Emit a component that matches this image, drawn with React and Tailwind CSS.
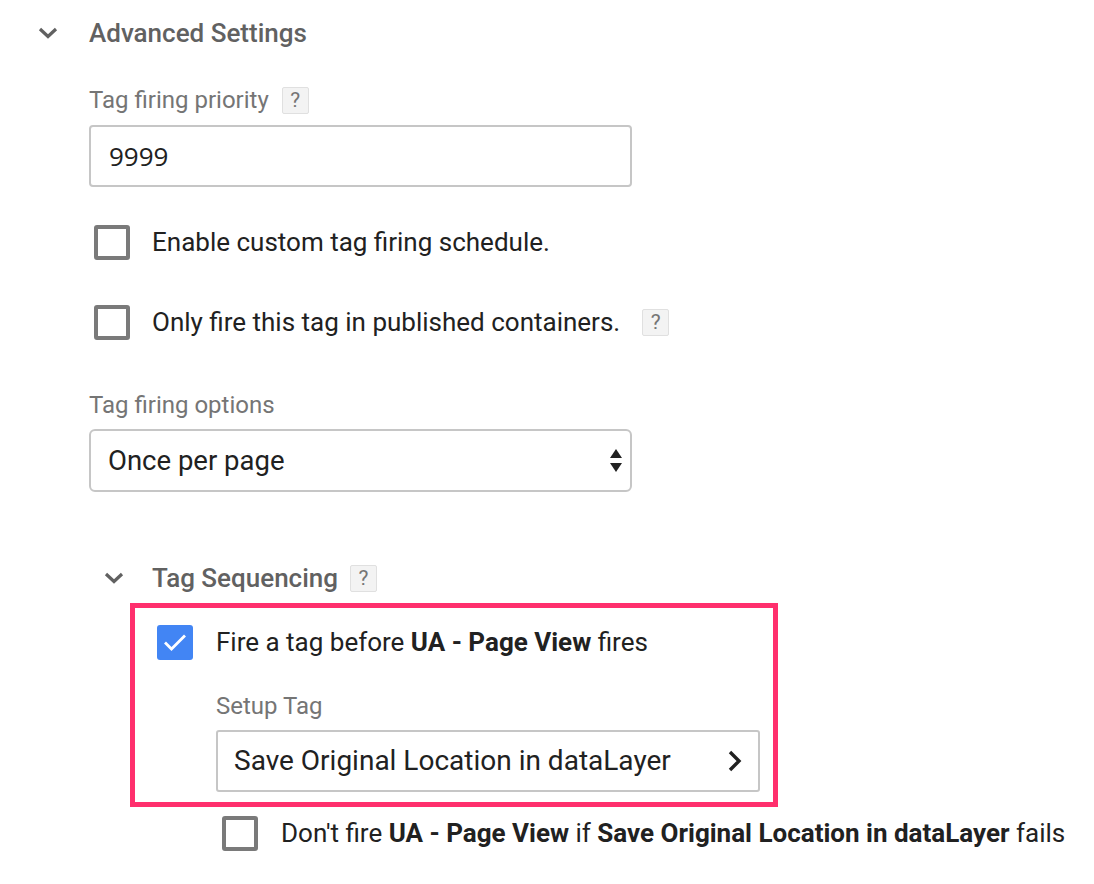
import React from "react";

const Help = ({ className = "" }) => (
  <span
    className={`inline-flex items-center justify-center w-[27px] h-[27px] bg-[#f3f3f3] border border-[#e0e0e0] text-[#757575] text-[21px] leading-none rounded-[2px] ${className}`}
  >
    ?
  </span>
);

const Box = ({ className = "" }) => (
  <span className={`block w-[36px] h-[35px] border-[4px] border-[#7a7a7a] rounded-[3px] bg-white shrink-0 ${className}`} />
);

const ChevronDown = () => (
  <svg width="20" height="12" viewBox="0 0 20 12" className="block">
    <polyline points="2,2 10,9.5 18,2" fill="none" stroke="#616161" strokeWidth="3.2" />
  </svg>
);

export default function App() {
  return (
    <div
      className="w-[1094px] h-[884px] bg-white overflow-hidden text-[#212121]"
      style={{ fontFamily: "Roboto, 'Liberation Sans', sans-serif" }}
    >
      <div className="pl-[38px] pt-[18px]">
        {/* Header */}
        <div className="flex items-center h-[30px]">
          <div className="w-[51px] flex items-center">
            <ChevronDown />
          </div>
          <span className="text-[26px] font-medium text-[#616161] leading-none">Advanced Settings</span>
        </div>

        <div className="ml-[51px]">
          {/* Tag firing priority */}
          <div className="flex items-center h-[28px] mt-[38px]">
            <span className="text-[24px] text-[#757575]">Tag firing priority</span>
            <Help className="ml-[13px]" />
          </div>
          <div className="mt-[11px] w-[543px] h-[62px] border-2 border-[#c6c6c6] rounded-[4px] flex items-center pl-[18px]">
            <span className="text-[26px] text-[#212121]" style={{ fontFamily: "'Open Sans', Roboto, sans-serif" }}>9999</span>
          </div>

          {/* Checkbox rows */}
          <div className="flex items-center h-[36px] mt-[37px] pl-[5px]">
            <Box />
            <span className="ml-[22px] text-[26px]">Enable custom tag firing schedule.</span>
          </div>
          <div className="flex items-center h-[36px] mt-[44px] pl-[5px]">
            <Box />
            <span className="ml-[22px] text-[26px]">Only fire this tag in published containers.</span>
            <Help className="ml-[22px]" />
          </div>

          {/* Tag firing options */}
          <div className="flex items-center h-[28px] mt-[51px]">
            <span className="text-[24px] text-[#757575]">Tag firing options</span>
          </div>
          <div className="mt-[10px] w-[543px] h-[63px] border-2 border-[#c6c6c6] rounded-[6px] flex items-center pl-[17px] pr-[8px]">
            <span className="text-[27.5px] flex-1">Once per page</span>
            <svg width="12" height="26" viewBox="0 0 12 26" className="block">
              <polygon points="6,1 12,10 0,10" fill="#212121" />
              <polygon points="0,15 12,15 6,24" fill="#212121" />
            </svg>
          </div>

          {/* Tag Sequencing */}
          <div className="flex items-center h-[28px] mt-[72px] pl-[15px]">
            <div className="w-[48px] flex items-center">
              <ChevronDown />
            </div>
            <span className="text-[26px] font-medium text-[#616161]">Tag Sequencing</span>
            <Help className="ml-[12px]" />
          </div>

          <div className="ml-[41px] mt-[11px] w-[648px] border-[5px] border-[#ff2f6d] pt-[16px] pb-[10px] pl-[22px] pr-[13px]">
            <div className="flex items-center h-[36px]">
              <span className="w-[36px] h-[35px] rounded-[3px] bg-[#4285f4] flex items-center justify-center shrink-0">
                <svg width="30" height="30" viewBox="0 0 30 30">
                  <polyline points="5,15.5 11.5,22 25,8.5" fill="none" stroke="white" strokeWidth="2.8" />
                </svg>
              </span>
              <span className="ml-[23px] text-[26px]">
                Fire a tag before <b className="font-bold">UA - Page View</b> fires
              </span>
            </div>
            <div className="ml-[59px]">
              <div className="flex items-center h-[28px] mt-[32px]">
                <span className="text-[24px] text-[#757575]">Setup Tag</span>
              </div>
              <div className="mt-[10px] h-[62px] border-2 border-[#c6c6c6] rounded-[3px] flex items-center pl-[16px] pr-[15px]">
                <span className="text-[28px] flex-1">Save Original Location in dataLayer</span>
                <svg width="16" height="22" viewBox="0 0 16 22" className="block">
                  <polyline points="3,2 12,11 3,20" fill="none" stroke="#212121" strokeWidth="3.4" />
                </svg>
              </div>
            </div>
          </div>

          {/* Don't fire */}
          <div className="flex items-center h-[36px] mt-[8px] pl-[133px]">
            <Box />
            <span className="ml-[23px] text-[26px] whitespace-nowrap">
              Don't fire <b className="font-bold">UA - Page View</b> if <b className="font-bold">Save Original Location in dataLayer</b> fails
            </span>
          </div>
        </div>
      </div>
    </div>
  );
}
